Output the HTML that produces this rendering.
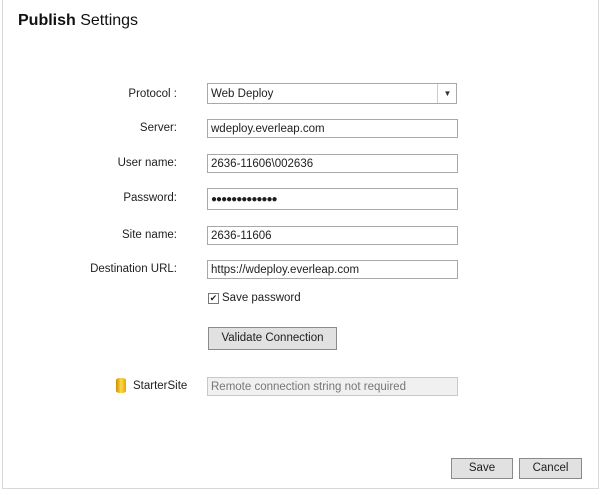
<!DOCTYPE html>
<html><head><style>
body{margin:0;width:600px;height:495px;background:#fff;position:relative;font-family:"Liberation Sans",sans-serif;font-size:11.5px;color:#1e1e1e;overflow:hidden}
.frame{position:absolute;left:2px;top:0;width:595px;height:488px;border:1px solid #d8d8d8;border-top:none}
.t{position:absolute;left:18px;top:12px;font-size:16px;color:#111}
.l{position:absolute;right:423px;text-align:right;white-space:nowrap}
.i{position:absolute;left:207px;width:246px;height:17px;border:1px solid #a8a8a8;background:#fff;line-height:18px;padding-left:3px;box-sizing:content-box;white-space:nowrap}
.b{position:absolute;border:1px solid #8a8a8a;background:#e1e1e1;text-align:center;box-sizing:border-box}
</style></head><body>
<div class="frame"></div>
<div class="t"><b>Publish</b> Settings</div>
<div class="l" style="top:88px">Protocol :</div>
<div class="i" style="top:83px;height:19px;line-height:20px;width:245px">Web Deploy</div>
<div style="position:absolute;left:437px;top:84px;width:19px;height:19px;border-left:1px solid #ccc;font-size:8px;text-align:center;line-height:19px;color:#333">▼</div>
<div class="l" style="top:122px">Server:</div>
<div class="i" style="top:119px">wdeploy.everleap.com</div>
<div class="l" style="top:157px">User name:</div>
<div class="i" style="top:154px">2636-11606\002636</div>
<div class="l" style="top:192px">Password:</div>
<div class="i" style="top:188px;height:20px;line-height:21px;font-size:10px;letter-spacing:-1px">●●●●●●●●●●●●●</div>
<div class="l" style="top:229px">Site name:</div>
<div class="i" style="top:226px">2636-11606</div>
<div class="l" style="top:263px">Destination URL:</div>
<div class="i" style="top:260px">https://wdeploy.everleap.com</div>
<div style="position:absolute;left:208px;top:293px;width:9px;height:9px;border:1px solid #777;font-size:9px;line-height:9px;text-align:center">✔</div>
<div style="position:absolute;left:222px;top:292px">Save password</div>
<div class="b" style="left:208px;top:327px;width:129px;height:23px;line-height:21px">Validate Connection</div>
<div style="position:absolute;left:116px;top:378px;width:10px;height:15px;background:linear-gradient(90deg,#c89000,#ffd84a,#e0a800);border-radius:4px/2px"></div>
<div style="position:absolute;left:133px;top:380px">StarterSite</div>
<div class="i" style="top:377px;background:#f0f0f0;border-color:#c8c8c8;color:#777">Remote connection string not required</div>
<div class="b" style="left:451px;top:458px;width:62px;height:21px;line-height:19px">Save</div>
<div class="b" style="left:519px;top:458px;width:63px;height:21px;line-height:19px">Cancel</div>
</body></html>
